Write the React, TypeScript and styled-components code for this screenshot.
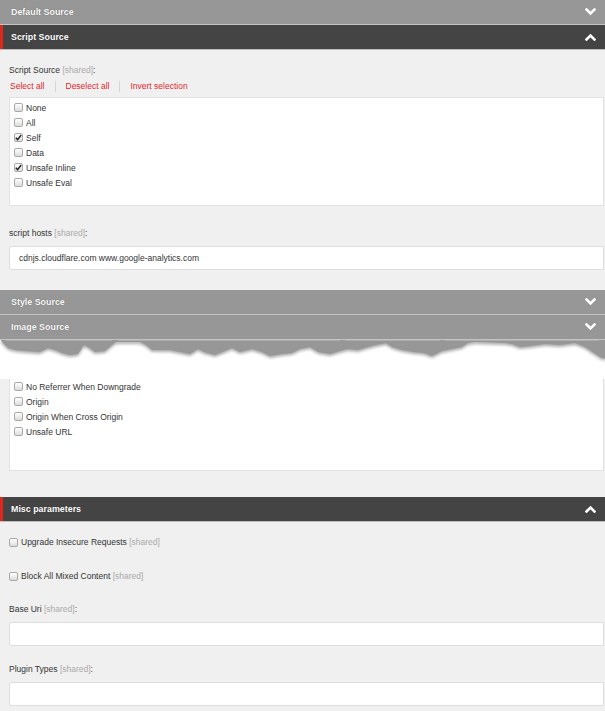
import React from "react";
import styled, { createGlobalStyle } from "styled-components";

const Global = createGlobalStyle`
  html, body { margin: 0; padding: 0; background: #f0f0f0; }
  body { font-family: "Liberation Sans", Arial, sans-serif; font-size: 8.5px; color: #333; }
  * { box-sizing: border-box; }
`;

const Page = styled.div`
  width: 605px;
  height: 711px;
  overflow: hidden;
  background: #f0f0f0;
  display: flex;
  flex-direction: column;
`;

const Header = styled.div<{ $dark?: boolean }>`
  height: 25px;
  flex: none;
  display: flex;
  align-items: center;
  justify-content: space-between;
  padding: 0 9px 0 11px;
  background: ${(p) => (p.$dark ? "#444444" : "#979797")};
  border-bottom: 1px solid ${(p) => (p.$dark ? "#bdbdbd" : "#c4c4c4")};
  color: #fff;
  font-weight: bold;
  font-size: 8.9px;
  text-shadow: 0 0 1px rgba(0, 0, 0, 0.5);
  position: relative;
  ${(p) =>
    p.$dark
      ? `&::before { content: ""; position: absolute; left: 0; top: 0; bottom: 0; width: 3px; background: #e1261c; }`
      : ""}
`;

const Chevron = ({ up }: { up?: boolean }) => (
  <svg width="11" height="8" viewBox="0 0 11 8">
    <polyline
      points={up ? "1.5,6.5 5.5,2.5 9.5,6.5" : "1.5,1.5 5.5,5.5 9.5,1.5"}
      fill="none"
      stroke="#fff"
      strokeWidth="2.6"
      strokeLinecap="square"
    />
  </svg>
);

const Section = styled.div<{ $top?: number; $bottom?: number }>`
  display: flex;
  flex-direction: column;
  padding: ${(p) => p.$top ?? 0}px 1px ${(p) => p.$bottom ?? 0}px 9px;
`;

const Label = styled.div<{ $mt?: number }>`
  line-height: 14px;
  margin-top: ${(p) => p.$mt ?? 0}px;
  color: #333;
`;

const Shared = styled.span`
  color: #aaa;
`;

const Links = styled.div`
  display: flex;
  align-items: center;
  line-height: 14px;
  margin-top: 2px;
  padding-left: 1px;
`;

const LinkA = styled.a`
  color: #e2272d;
  text-decoration: none;
  cursor: pointer;
`;

const Sep = styled.span`
  width: 1px;
  height: 11px;
  background: #d5d5d5;
  margin: 0 10px;
`;

const ListBox = styled.div<{ $h: number; $mt?: number; $noTop?: boolean; $pt?: number }>`
  height: ${(p) => p.$h}px;
  margin-top: ${(p) => p.$mt ?? 0}px;
  background: #fff;
  border: 1px solid #e2e2e2;
  ${(p) => (p.$noTop ? "border-top: none;" : "")}
  padding: ${(p) => p.$pt ?? 2}px 0 0 4px;
  display: flex;
  flex-direction: column;
`;

const Row = styled.label<{ $h?: number }>`
  display: flex;
  align-items: center;
  height: ${(p) => p.$h ?? 15}px;
  gap: 3px;
  color: #333;
`;

const Box = styled.span`
  width: 9px;
  height: 9px;
  flex: none;
  border: 1px solid #a9a9a9;
  border-radius: 2px;
  background: linear-gradient(#ffffff, #dcdcdc);
  display: inline-flex;
  align-items: center;
  justify-content: center;
`;

const Check = ({ checked }: { checked?: boolean }) => (
  <Box>
    {checked && (
      <svg width="7" height="7" viewBox="0 0 7 7">
        <polyline points="0.8,3.8 2.6,5.6 6.2,1" fill="none" stroke="#222" strokeWidth="1.4" />
      </svg>
    )}
  </Box>
);

const Input = styled.div<{ $mt?: number }>`
  height: 24px;
  margin-top: ${(p) => p.$mt ?? 0}px;
  background: #fff;
  border: 1px solid #dedede;
  border-radius: 2px;
  display: flex;
  align-items: center;
  padding-left: 9px;
  color: #333;
`;

const Torn = styled.div`
  height: 40px;
  flex: none;
  background: #fff;
  margin-top: -1px;
`;

const TornEdge = () => {
  const pts: [number, number][] = [
    [0, 0], [3, 4], [8, 9], [15, 11], [25, 12], [40, 13], [48, 9], [55, 11], [62, 14],
    [70, 16], [78, 15], [84, 6], [88, 8], [95, 13], [105, 12], [112, 6], [116, 3],
    [140, 3], [146, 6], [152, 11], [170, 11], [180, 13], [190, 15], [198, 10], [204, 13],
    [215, 16], [225, 12], [232, 9], [240, 13], [252, 10], [262, 13], [270, 17], [282, 15],
    [292, 14], [300, 10], [310, 8], [318, 13], [330, 15], [340, 12], [348, 10], [358, 11],
    [368, 8], [376, 6], [386, 4], [392, 8], [402, 11], [414, 13], [424, 14], [432, 17],
    [442, 12], [452, 10], [462, 8], [468, 4], [475, 3], [505, 4], [512, 5], [520, 8],
    [530, 7], [545, 5], [560, 6], [575, 4], [585, 8], [594, 14], [600, 18], [605, 20],
    [605, 0],
  ];
  const d = pts.map(([x, y]) => `${x},${y}`).join(" ");
  return (
    <svg width="605" height="26" viewBox="0 0 605 26" style={{ display: "block" }}>
      <defs>
        <filter id="blur" x="-5%" y="-50%" width="110%" height="200%">
          <feGaussianBlur stdDeviation="1.6" />
        </filter>
      </defs>
      <polygon points={d} transform="translate(0,2)" fill="#8c8c8c" opacity="0.75" filter="url(#blur)" />
      <polygon points={d} fill="#979797" />
      <line x1="6" y1="1" x2="112" y2="1" stroke="#c4c4c4" />
      <line x1="118" y1="1" x2="340" y2="1" stroke="#c4c4c4" />
      <line x1="346" y1="1" x2="440" y2="1" stroke="#c4c4c4" />
      <line x1="445" y1="1" x2="598" y2="1" stroke="#c4c4c4" />
    </svg>
  );
};

const Spacer = styled.div<{ $h: number }>`
  height: ${(p) => p.$h}px;
  flex: none;
`;

export default function App() {
  return (
    <Page>
      <Global />
      <Header>
        <span>Default Source</span>
        <Chevron />
      </Header>
      <Header $dark>
        <span>Script Source</span>
        <Chevron up />
      </Header>
      <Section $top={13} $bottom={20}>
        <Label>
          Script Source <Shared>[shared]</Shared>:
        </Label>
        <Links>
          <LinkA>Select all</LinkA>
          <Sep />
          <LinkA>Deselect all</LinkA>
          <Sep />
          <LinkA>Invert selection</LinkA>
        </Links>
        <ListBox $h={109} $mt={4}>
          <Row><Check />None</Row>
          <Row><Check />All</Row>
          <Row><Check checked />Self</Row>
          <Row><Check />Data</Row>
          <Row><Check checked />Unsafe Inline</Row>
          <Row><Check />Unsafe Eval</Row>
        </ListBox>
        <Label $mt={20}>
          script hosts <Shared>[shared]</Shared>:
        </Label>
        <Input $mt={6}>cdnjs.cloudflare.com www.google-analytics.com</Input>
      </Section>
      <Header>
        <span>Style Source</span>
        <Chevron />
      </Header>
      <Header>
        <span>Image Source</span>
        <Chevron />
      </Header>
      <Torn>
        <TornEdge />
      </Torn>
      <Section $bottom={26}>
        <ListBox $h={92} $noTop $pt={0}>
          <Row><Check />No Referrer When Downgrade</Row>
          <Row><Check />Origin</Row>
          <Row><Check />Origin When Cross Origin</Row>
          <Row><Check />Unsafe URL</Row>
        </ListBox>
      </Section>
      <Header $dark>
        <span>Misc parameters</span>
        <Chevron up />
      </Header>
      <Section $top={13}>
        <Row $h={14}>
          <Check />
          <span>
            Upgrade Insecure Requests <Shared>[shared]</Shared>
          </span>
        </Row>
        <Spacer $h={20} />
        <Row $h={14}>
          <Check />
          <span>
            Block All Mixed Content <Shared>[shared]</Shared>
          </span>
        </Row>
        <Label $mt={19}>
          Base Uri <Shared>[shared]</Shared>:
        </Label>
        <Input $mt={6} />
        <Label $mt={16}>
          Plugin Types <Shared>[shared]</Shared>:
        </Label>
        <Input $mt={6} />
      </Section>
    </Page>
  );
}
